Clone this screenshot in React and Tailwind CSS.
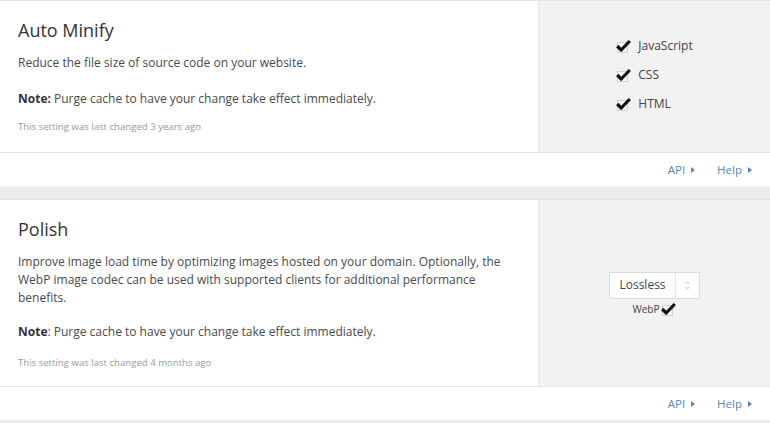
import React from "react";

// Checkbox with heavy check mark overlapping a faint square
const CheckMark = () => (
  <svg width="15" height="14" viewBox="0 0 15 14" className="shrink-0">
    <rect x="1.5" y="3.5" width="10" height="10" fill="#fafafa" stroke="#d0d0d0" />
    <path d="M1.2 7 L5.2 11 L13.8 2" fill="none" stroke="#111" strokeWidth="3.2" strokeLinejoin="round" />
  </svg>
);

const Caret = () => (
  <svg width="4" height="6" viewBox="0 0 4 6" className="ml-[6px] inline-block">
    <path d="M0 0 L4 3 L0 6 Z" fill="currentColor" />
  </svg>
);

const Footer = () => (
  <div className="flex h-[34px] items-center justify-end border-t border-[#e4e4e4] bg-white pr-[18px] text-[11.5px] text-[#5489b4]">
    <a className="flex items-center">
      API
      <Caret />
    </a>
    <a className="ml-[22px] flex items-center">
      Help
      <Caret />
    </a>
  </div>
);

const Card = ({ bodyHeight, children, control }) => (
  <div className="border-t border-[#e4e4e4] bg-white">
    <div className={`flex ${bodyHeight}`}>
      <div className="flex-1 pl-[18px] pr-[20px]">{children}</div>
      <div className="flex w-[232px] shrink-0 items-center justify-center border-l border-[#e4e4e4] bg-[#f2f2f2]">
        {control}
      </div>
    </div>
    <Footer />
  </div>
);

export default function App() {
  const languages = ["JavaScript", "CSS", "HTML"];

  return (
    <div
      className="w-[770px] h-[423px] overflow-hidden bg-[#ececec] text-[#4a4a4a]"
      style={{ fontFamily: '"Open Sans", "Noto Sans", sans-serif' }}
    >
      {/* Auto Minify */}
      <Card
        bodyHeight="h-[151px]"
        control={
          <div className="-mt-[3px] flex flex-col gap-[11px]">
            {languages.map((lang) => (
              <label key={lang} className="flex items-center gap-[7px] text-[12px] leading-[18px] text-[#444]">
                <CheckMark />
                {lang}
              </label>
            ))}
          </div>
        }
      >
        <h2 className="pt-[17px] text-[18px] leading-[24px] text-[#333]">Auto Minify</h2>
        <p className="mt-[12px] text-[12px] leading-[18px]">
          Reduce the file size of source code on your website.
        </p>
        <p className="mt-[18px] text-[12px] leading-[18px]">
          <strong className="font-bold text-[#333]">Note:</strong> Purge cache to have your change take effect immediately.
        </p>
        <p className="mt-[11px] text-[9.6px] leading-[16px] text-[#999]">
          This setting was last changed 3 years ago
        </p>
      </Card>

      <div className="h-[13px]" />

      {/* Polish */}
      <Card
        bodyHeight="h-[186px]"
        control={
          <div className="mt-[1px] flex flex-col items-center">
            <div className="flex h-[27px] w-[91px] border border-[#dcdcdc] bg-white text-[12px] text-[#444]">
              <span className="flex flex-1 items-center justify-center">Lossless</span>
              <span className="flex w-[24px] items-center justify-center border-l border-[#e2e2e2]">
                <svg width="5" height="9" viewBox="0 0 5 9">
                  <path d="M0.5 3 L2.5 1 L4.5 3 M0.5 6 L2.5 8 L4.5 6" fill="none" stroke="#b8b8b8" strokeWidth="0.9" />
                </svg>
              </span>
            </div>
            <label className="mt-[3px] flex items-center gap-[2px] text-[10px] leading-[14px] text-[#444]">
              WebP
              <CheckMark />
            </label>
          </div>
        }
      >
        <h2 className="pt-[17px] text-[18px] leading-[24px] text-[#333]">Polish</h2>
        <p className="mt-[12px] text-[12px] leading-[18px]">
          Improve image load time by optimizing images hosted on your domain. Optionally, the WebP image codec can be used with supported clients for additional performance benefits.
        </p>
        <p className="mt-[16px] text-[12px] leading-[18px]">
          <strong className="font-bold text-[#333]">Note</strong>: Purge cache to have your change take effect immediately.
        </p>
        <p className="mt-[14px] text-[9.6px] leading-[16px] text-[#999]">
          This setting was last changed 4 months ago
        </p>
      </Card>
    </div>
  );
}
